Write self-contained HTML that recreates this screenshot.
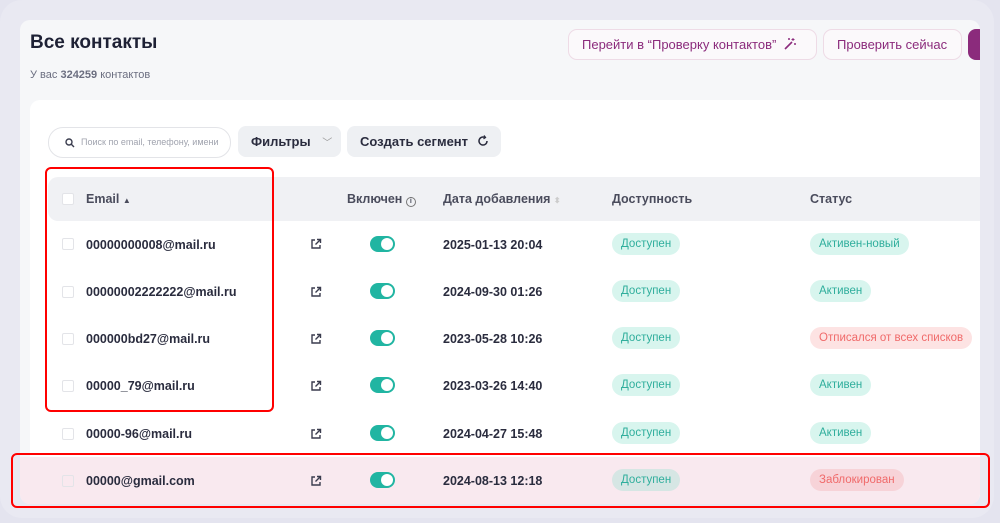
<!DOCTYPE html>
<html><head><meta charset="utf-8"><style>
*{box-sizing:border-box;margin:0;padding:0}
body{width:1000px;height:523px;background:#e4e4ef;font-family:"Liberation Sans",Arial,sans-serif;position:relative;overflow:hidden;color:#23253a}
.ring{position:absolute;left:0;top:0;width:994px;height:518px;border-radius:22px;background:#e9e9f2}
.win{position:absolute;left:20px;top:20px;width:960px;height:484px;background:#f6f7f9;border-radius:10px;overflow:hidden}
.abs{position:absolute}
h1{position:absolute;left:10px;top:12px;font-size:19px;font-weight:bold;color:#1e2135}
.sub{left:10px;top:49px;font-size:11px;color:#6b6e80}
.btn{position:absolute;top:9px;height:31px;border:1px solid #eedbe6;border-radius:9px;background:#fbf9fb;color:#8b2b7c;font-size:13px;line-height:29px;padding-left:13px}
.card{position:absolute;left:10px;top:80px;width:960px;height:402px;background:#fff;border-radius:10px}
.search{position:absolute;left:28px;top:107px;width:183px;height:31px;border:1px solid #e3e4e8;border-radius:15px;font-size:9px;color:#a0a3ae;line-height:29px;padding-left:32px;background:#fff;white-space:nowrap;overflow:hidden}
.gbtn{position:absolute;top:106px;height:31px;border-radius:8px;background:#eef0f3;font-size:13px;font-weight:bold;color:#2a2c3e;line-height:31px;padding-left:13px}
.thead{position:absolute;left:28px;top:157px;width:940px;height:44px;background:#f0f1f4;border-radius:10px 0 0 10px;font-size:12.5px;color:#4a4c5c}
.cb{position:absolute;width:12px;height:12px;border:1px solid #e3e4e8;border-radius:2px;background:#fff}
.row{position:absolute;left:0;width:960px;height:47px}
.em{position:absolute;left:66px;font-size:12.5px;font-weight:bold;color:#2a2c3e}
.dt{position:absolute;left:423px;font-size:12.5px;font-weight:bold;color:#2a2c3e}
.tg{position:absolute;left:350px;width:25px;height:16px;border-radius:8px;background:#21b5a2}
.tg:after{content:"";position:absolute;right:2px;top:2px;width:12px;height:12px;border-radius:50%;background:#fff}
.bd{position:absolute;height:22px;border-radius:11px;font-size:11.5px;line-height:23px;padding:0 9px;background:#d8f5ee;color:#2fae9c}
.red{background:#fde3e3;color:#f06a6a}
.lk{position:absolute;left:290px}
.box{position:absolute;border:2px solid #f00;border-radius:6px}
</style></head><body>
<div class="ring"></div>
<div class="win">
<h1>Все контакты</h1>
<div class="abs sub">У вас <b>324259</b> контактов</div>
<div class="btn" style="left:548px;width:249px">Перейти в “Проверку контактов” <svg width="14" height="14" viewBox="0 0 14 14" style="vertical-align:-2px;margin-left:3px"><path d="M2 12L9 5" stroke="#8b2b7c" stroke-width="1.6"/><path d="M10 1v3M8.5 2.5h3M12 6v2M11 7h2M6 1v2M5 2h2" stroke="#8b2b7c" stroke-width="1"/></svg></div>
<div class="btn" style="left:803px;width:139px">Проверить сейчас</div>
<div class="abs" style="left:948px;top:9px;width:20px;height:31px;background:#8b2b7c;border-radius:8px"></div>
<div class="card"></div>
<div class="search"><svg class="abs" style="left:16px;top:10px" width="10" height="10" viewBox="0 0 10 10"><circle cx="4" cy="4" r="3" stroke="#3a3c4e" stroke-width="1.4" fill="none"/><path d="M6.3 6.3L9 9" stroke="#3a3c4e" stroke-width="1.4"/></svg>Поиск по email, телефону, имени</div>
<div class="gbtn" style="left:218px;width:103px">Фильтры <span style="color:#999;font-weight:normal;font-size:10px;margin-left:8px">﹀</span></div>
<div class="gbtn" style="left:327px;width:154px">Создать сегмент <svg width="12" height="12" viewBox="0 0 12 12" style="vertical-align:-1px;margin-left:5px"><path d="M10 6A4 4 0 1 1 7.5 2.3" stroke="#2a2c3e" stroke-width="1.5" fill="none"/><path d="M7 0.5L8.5 2.5L6.5 3.8" stroke="#2a2c3e" stroke-width="1.3" fill="none"/></svg></div>
<div class="thead">
<div class="cb" style="left:14px;top:16px"></div>
<div class="abs" style="left:38px;top:15px;font-weight:bold">Email <span style="font-size:8px">▲</span></div>
<div class="abs" style="left:299px;top:15px;font-weight:bold">Включен <span style="display:inline-block;width:10px;height:10px;border:1px solid #777;border-radius:50%;font-size:7px;line-height:8px;text-align:center;vertical-align:0">i</span></div>
<div class="abs" style="left:395px;top:15px;font-weight:bold">Дата добавления <span style="color:#ccc;font-size:8px">⬍</span></div>
<div class="abs" style="left:564px;top:15px;font-weight:bold">Доступность</div>
<div class="abs" style="left:762px;top:15px;font-weight:bold">Статус</div>
</div>
<div class="row" style="top:437px;height:47px;background:#f9e9ef"></div>
<div class="cb" style="left:42px;top:218px"></div><div class="em" style="top:218px">00000000008@mail.ru</div>
<div class="cb" style="left:42px;top:266px"></div><div class="em" style="top:265px">00000002222222@mail.ru</div>
<div class="cb" style="left:42px;top:313px"></div><div class="em" style="top:312px">000000bd27@mail.ru</div>
<div class="cb" style="left:42px;top:360px"></div><div class="em" style="top:359px">00000_79@mail.ru</div>
<div class="cb" style="left:42px;top:408px"></div><div class="em" style="top:407px">00000-96@mail.ru</div>
<div class="cb" style="left:42px;top:455px;background:#f9e9ef"></div><div class="em" style="top:454px">00000@gmail.com</div>
<svg class="lk" style="top:218px" width="12" height="12" viewBox="0 0 12 12"><path d="M5 2H2v8h8V7M7 1.5h3.5V5M10.5 1.5L5.5 6.5" stroke="#3a3c4e" stroke-width="1.4" fill="none"/></svg>
<svg class="lk" style="top:266px" width="12" height="12" viewBox="0 0 12 12"><path d="M5 2H2v8h8V7M7 1.5h3.5V5M10.5 1.5L5.5 6.5" stroke="#3a3c4e" stroke-width="1.4" fill="none"/></svg>
<svg class="lk" style="top:313px" width="12" height="12" viewBox="0 0 12 12"><path d="M5 2H2v8h8V7M7 1.5h3.5V5M10.5 1.5L5.5 6.5" stroke="#3a3c4e" stroke-width="1.4" fill="none"/></svg>
<svg class="lk" style="top:360px" width="12" height="12" viewBox="0 0 12 12"><path d="M5 2H2v8h8V7M7 1.5h3.5V5M10.5 1.5L5.5 6.5" stroke="#3a3c4e" stroke-width="1.4" fill="none"/></svg>
<svg class="lk" style="top:408px" width="12" height="12" viewBox="0 0 12 12"><path d="M5 2H2v8h8V7M7 1.5h3.5V5M10.5 1.5L5.5 6.5" stroke="#3a3c4e" stroke-width="1.4" fill="none"/></svg>
<svg class="lk" style="top:455px" width="12" height="12" viewBox="0 0 12 12"><path d="M5 2H2v8h8V7M7 1.5h3.5V5M10.5 1.5L5.5 6.5" stroke="#3a3c4e" stroke-width="1.4" fill="none"/></svg>
<div class="tg" style="top:216px"></div><div class="tg" style="top:263px"></div><div class="tg" style="top:310px"></div><div class="tg" style="top:357px"></div><div class="tg" style="top:405px"></div><div class="tg" style="top:452px"></div>
<div class="dt" style="top:218px">2025-01-13 20:04</div>
<div class="dt" style="top:265px">2024-09-30 01:26</div>
<div class="dt" style="top:312px">2023-05-28 10:26</div>
<div class="dt" style="top:359px">2023-03-26 14:40</div>
<div class="dt" style="top:407px">2024-04-27 15:48</div>
<div class="dt" style="top:454px">2024-08-13 12:18</div>
<div class="bd" style="left:592px;top:213px">Доступен</div>
<div class="bd" style="left:592px;top:260px">Доступен</div>
<div class="bd" style="left:592px;top:307px">Доступен</div>
<div class="bd" style="left:592px;top:354px">Доступен</div>
<div class="bd" style="left:592px;top:402px">Доступен</div>
<div class="bd" style="left:592px;top:449px;background:#d6e6e4">Доступен</div>
<div class="bd" style="left:790px;top:213px">Активен-новый</div>
<div class="bd" style="left:790px;top:260px">Активен</div>
<div class="bd red" style="left:790px;top:307px">Отписался от всех списков</div>
<div class="bd" style="left:790px;top:354px">Активен</div>
<div class="bd" style="left:790px;top:402px">Активен</div>
<div class="bd red" style="left:790px;top:449px;background:#f7d3d8">Заблокирован</div>
</div>
<div class="box" style="left:45px;top:167px;width:229px;height:245px"></div>
<div class="box" style="left:11px;top:453px;width:979px;height:55px"></div>
</body></html>
